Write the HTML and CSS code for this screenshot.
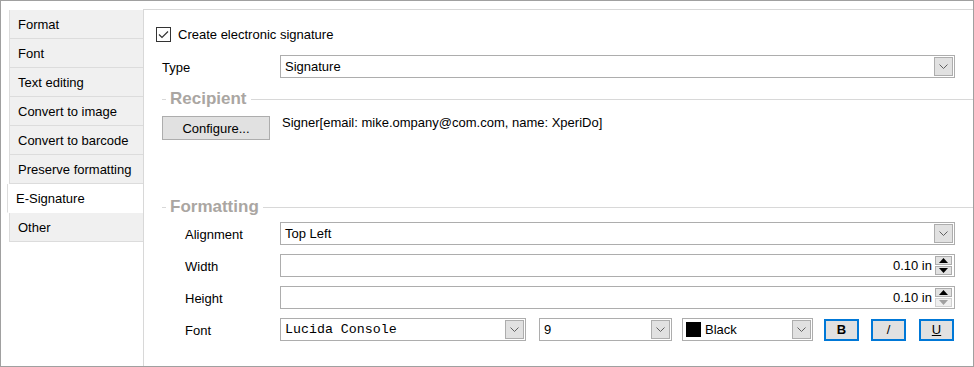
FILE: index.html
```html
<!DOCTYPE html>
<html lang="en">
<head>
    <meta charset="UTF-8">
    <title>E-Signature</title>
    <link rel="stylesheet" href="styles.css">
</head>
<body>
<div class="window">
    <ul class="tabs">
        <li>Format</li>
        <li>Font</li>
        <li>Text editing</li>
        <li>Convert to image</li>
        <li>Convert to barcode</li>
        <li>Preserve formatting</li>
        <li class="current">E-Signature</li>
        <li>Other</li>
    </ul>
    <div class="panel">
        <label class="check-row">
            <span class="checkbox">
                <svg width="13" height="13" viewBox="0 0 13 13"><path d="M2 6.5 L5 9.5 L11 3.5" fill="none" stroke="#333" stroke-width="1.2"/></svg>
            </span>
            Create electronic signature
        </label>

        <div class="row type-row">
            <span class="label">Type</span>
            <div class="select">
                <span class="value">Signature</span>
                <span class="arrow"><svg width="9" height="5" viewBox="0 0 9 5"><path d="M0.5 0.5 L4.5 4.5 L8.5 0.5" fill="none" stroke="#606060"/></svg></span>
            </div>
        </div>

        <div class="group">Recipient</div>
        <div class="recipient">
            <button class="btn">Configure...</button>
            <span class="signer">Signer[email: mike.ompany@com.com, name: XperiDo]</span>
        </div>

        <div class="group formatting">Formatting</div>

        <div class="row sub">
            <span class="label">Alignment</span>
            <div class="select">
                <span class="value">Top Left</span>
                <span class="arrow"><svg width="9" height="5" viewBox="0 0 9 5"><path d="M0.5 0.5 L4.5 4.5 L8.5 0.5" fill="none" stroke="#606060"/></svg></span>
            </div>
        </div>
        <div class="row sub">
            <span class="label">Width</span>
            <div class="field">
                <span class="value">0.10 in</span>
                <span class="spin">
                    <span><svg width="9" height="5" viewBox="0 0 9 5"><path d="M0 5 L4.5 0 L9 5Z" fill="#000"/></svg></span>
                    <span><svg width="9" height="5" viewBox="0 0 9 5"><path d="M0 0 L4.5 5 L9 0Z" fill="#000"/></svg></span>
                </span>
            </div>
        </div>
        <div class="row sub">
            <span class="label">Height</span>
            <div class="field">
                <span class="value">0.10 in</span>
                <span class="spin">
                    <span><svg width="9" height="5" viewBox="0 0 9 5"><path d="M0 5 L4.5 0 L9 5Z" fill="#000"/></svg></span>
                    <span class="off"><svg width="9" height="5" viewBox="0 0 9 5"><path d="M0 0 L4.5 5 L9 0Z" fill="#a0a0a0"/></svg></span>
                </span>
            </div>
        </div>
        <div class="row sub font-row">
            <span class="label">Font</span>
            <div class="select font-name">
                <span class="value mono">Lucida Console</span>
                <span class="arrow"><svg width="9" height="5" viewBox="0 0 9 5"><path d="M0.5 0.5 L4.5 4.5 L8.5 0.5" fill="none" stroke="#606060"/></svg></span>
            </div>
            <div class="select font-size">
                <span class="value">9</span>
                <span class="arrow"><svg width="9" height="5" viewBox="0 0 9 5"><path d="M0.5 0.5 L4.5 4.5 L8.5 0.5" fill="none" stroke="#606060"/></svg></span>
            </div>
            <div class="select font-color">
                <span class="swatch"></span>
                <span class="value">Black</span>
                <span class="arrow"><svg width="9" height="5" viewBox="0 0 9 5"><path d="M0.5 0.5 L4.5 4.5 L8.5 0.5" fill="none" stroke="#606060"/></svg></span>
            </div>
            <button class="style-btn bold">B</button>
            <button class="style-btn italic">/</button>
            <button class="style-btn under">U</button>
        </div>
    </div>
</div>
</body>
</html>
```

FILE: styles.css
```css
* {
    margin: 0;
    padding: 0;
    box-sizing: border-box;
}

body {
    font-family: "Liberation Sans", Arial, sans-serif;
    font-size: 13px;
    color: #000;
    background: #fff;
}

ul {
    list-style: none;
}

.window {
    width: 974px;
    height: 367px;
    border: 1px solid #a0a0a0;
    display: flex;
}

/* left tab list */
.tabs {
    width: 142px;
    padding-top: 9px;
}

.tabs li {
    height: 29px;
    margin-left: 8px;
    padding: 2px 0 0 8px;
    line-height: 26px;
    background-color: #f0f0f0;
    border-left: 1px solid #dcdcdc;
    border-bottom: 1px solid #dcdcdc;
}

.tabs li.current {
    margin-left: 6px;
    padding-left: 8px;
    background-color: #fff;
    border-bottom-color: #fff;
}

/* right panel */
.panel {
    flex: 1;
    margin-top: 8px;
    border-top: 1px solid #d8d8d8;
    border-left: 1px solid #d8d8d8;
    padding: 0 18px 0 18px;
}

.check-row {
    display: flex;
    align-items: center;
    gap: 7px;
    margin: 17px 0 0 -6px;
    height: 15px;
}

.checkbox {
    width: 15px;
    height: 15px;
    border: 1px solid #333;
    display: flex;
    align-items: center;
    justify-content: center;
}

.row {
    display: flex;
    align-items: center;
    height: 23px;
}

.row .label {
    width: 118px;
    flex: none;
    padding-top: 1px;
}

.row.sub .label {
    padding-left: 23px;
}

.type-row {
    margin-top: 13px;
}

.select,
.field {
    flex: 1;
    height: 23px;
    border: 1px solid #adadad;
    display: flex;
    align-items: center;
    padding-left: 4px;
    background: #fff;
}

.select .value {
    flex: 1;
}

.arrow {
    width: 19px;
    height: 19px;
    margin-right: 1px;
    background-color: #e1e1e1;
    border: 1px solid #adadad;
    display: flex;
    align-items: center;
    justify-content: center;
}

.field .value {
    flex: 1;
    text-align: right;
    padding-right: 3px;
}

.spin {
    width: 17px;
    height: 19px;
    margin-right: 2px;
    display: flex;
    flex-direction: column;
    gap: 1px;
}

.spin span {
    flex: 1;
    background-color: #e1e1e1;
    border: 1px solid #adadad;
    display: flex;
    align-items: center;
    justify-content: center;
}

.spin span.off {
    background-color: #efefef;
    border-color: #d0d0d0;
}

/* section headers */
.group {
    display: flex;
    align-items: center;
    gap: 4px;
    height: 16px;
    margin-right: -18px;
    margin-top: 13px;
    font-size: 17px;
    font-weight: bold;
    color: #aaa6a2;
}

.group::before {
    content: "";
    width: 4px;
    border-top: 1px solid #d8d8d8;
}

.group::after {
    content: "";
    flex: 1;
    border-top: 1px solid #d8d8d8;
}

.group.formatting {
    margin-top: 59px;
}

.recipient {
    display: flex;
    align-items: flex-start;
    margin-top: 9px;
    height: 24px;
}

.btn {
    width: 108px;
    height: 24px;
    background-color: #e1e1e1;
    border: 1px solid #adadad;
    font-family: inherit;
    font-size: inherit;
    color: #000;
}

.signer {
    margin-left: 12px;
    line-height: 14px;
}

.formatting + .row {
    margin-top: 7px;
}

.row.sub + .row.sub {
    margin-top: 9px;
}

.row.sub.font-row {
    margin-top: 9px;
}

.font-row .select {
    flex: none;
}

.font-name {
    width: 246px;
}

.mono {
    font-family: "Liberation Mono", "DejaVu Sans Mono", monospace;
    font-size: 13.3px;
}

.font-size {
    width: 133px;
    margin-left: 13px;
}

.font-color {
    width: 131px;
    margin-left: 10px;
    padding-left: 3px;
}

.swatch {
    width: 15px;
    height: 15px;
    background-color: #000;
    margin-right: 4px;
}

.style-btn {
    width: 35px;
    height: 22px;
    margin-left: 12px;
    background-color: #e1e1e1;
    border: 2px solid #0078d7;
    font-family: inherit;
    font-size: 13px;
    color: #000;
}

.style-btn.bold {
    margin-left: 11px;
    font-weight: bold;
}

.style-btn.under {
    margin-left: 13px;
    text-decoration: underline;
}
```
